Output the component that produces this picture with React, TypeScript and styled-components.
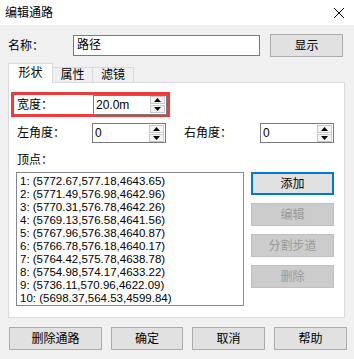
import React from "react";
import styled, { createGlobalStyle } from "styled-components";

const GlobalStyle = createGlobalStyle`
  html, body {
    margin: 0;
    padding: 0;
    background: #f0f0f0;
  }
  body {
    font-family: "Liberation Sans", "Noto Sans CJK SC", sans-serif;
    font-size: 12px;
    color: #000;
  }
`;

const vertices = [
  "1: (5772.67,577.18,4643.65)",
  "2: (5771.49,576.98,4642.96)",
  "3: (5770.31,576.78,4642.26)",
  "4: (5769.13,576.58,4641.56)",
  "5: (5767.96,576.38,4640.87)",
  "6: (5766.78,576.18,4640.17)",
  "7: (5764.42,575.78,4638.78)",
  "8: (5754.98,574.17,4633.22)",
  "9: (5736.11,570.96,4622.09)",
  "10: (5698.37,564.53,4599.84)",
];

export default function App() {
  return (
    <Window>
      <GlobalStyle />
      <TitleBar>
        <Title>编辑通路</Title>
        <CloseIcon width="12" height="12" viewBox="0 0 12 12">
          <path d="M1 1 L11 11 M11 1 L1 11" stroke="#000" strokeWidth="1" />
        </CloseIcon>
      </TitleBar>

      <Body>
        <NameRow>
          <NameLabel>名称：</NameLabel>
          <TextInput>路径</TextInput>
          <Button $width={73}>显示</Button>
        </NameRow>

        <TabStrip>
          <Tab $active $width={45}>形状</Tab>
          <Tab $width={40}>属性</Tab>
          <Tab $width={41}>滤镜</Tab>
        </TabStrip>

        <Panel>
          <Highlight>
            <FieldLabel $width={76}>宽度：</FieldLabel>
            <Spinner value="20.0m" />
          </Highlight>

          <AngleRow>
            <FieldLabel $width={75}>左角度：</FieldLabel>
            <Spinner value="0" />
            <Spacer />
            <FieldLabel $width={76}>右角度：</FieldLabel>
            <Spinner value="0" />
          </AngleRow>

          <SectionLabel>顶点：</SectionLabel>

          <ListRow>
            <List>
              {vertices.map((v) => (
                <ListItem key={v}>{v}</ListItem>
              ))}
            </List>
            <SideButtons>
              <Button $width={83} $focused>添加</Button>
              <Button $width={83} $disabled>编辑</Button>
              <Button $width={83} $disabled>分割步道</Button>
              <Button $width={83} $disabled>删除</Button>
            </SideButtons>
          </ListRow>
        </Panel>

        <Footer>
          <Button $width={93}>删除通路</Button>
          <Button $width={72}>确定</Button>
          <Button $width={73}>取消</Button>
          <Button $width={73}>帮助</Button>
        </Footer>
      </Body>
    </Window>
  );
}

function Spinner({ value }: { value: string }) {
  return (
    <SpinBox>
      <SpinText>{value}</SpinText>
      <SpinButtons>
        <SpinArrow>
          <svg width="7" height="4" viewBox="0 0 7 4">
            <path d="M3.5 0 L7 4 L0 4 Z" fill="#000" />
          </svg>
        </SpinArrow>
        <SpinArrow>
          <svg width="7" height="4" viewBox="0 0 7 4">
            <path d="M0 0 L7 0 L3.5 4 Z" fill="#000" />
          </svg>
        </SpinArrow>
      </SpinButtons>
    </SpinBox>
  );
}

const Window = styled.div`
  width: 354px;
  height: 359px;
  background: #f0f0f0;
  overflow: hidden;
`;

const TitleBar = styled.div`
  height: 25px;
  background: #fff;
  display: flex;
  align-items: center;
  justify-content: space-between;
  padding: 0 9px 0 5px;
  box-sizing: border-box;
`;

const Title = styled.span`
  font-size: 12px;
  line-height: 14px;
`;

const CloseIcon = styled.svg`
  display: block;
`;

const Body = styled.div`
  padding: 9px 0 0 8px;
`;

const NameRow = styled.div`
  display: flex;
  align-items: center;
  height: 23px;
`;

const NameLabel = styled.span`
  width: 65px;
  line-height: 14px;
`;

const TextInput = styled.div`
  width: 187px;
  height: 21px;
  box-sizing: border-box;
  border: 1px solid #7a7a7a;
  background: #fff;
  padding: 0 3px;
  line-height: 19px;
  margin-right: 10px;
`;

const Button = styled.div<{ $width: number; $focused?: boolean; $disabled?: boolean }>`
  width: ${(p) => p.$width}px;
  height: 23px;
  box-sizing: border-box;
  display: flex;
  align-items: center;
  justify-content: center;
  background: ${(p) => (p.$disabled ? "#cccccc" : "#e1e1e1")};
  border: ${(p) => (p.$focused ? "2px solid #0078d7" : p.$disabled ? "1px solid #bfbfbf" : "1px solid #adadad")};
  color: ${(p) => (p.$disabled ? "#9a9a9a" : "#000")};
  line-height: 14px;
`;

const TabStrip = styled.div`
  display: flex;
  align-items: flex-end;
  height: 19px;
  margin-top: 7px;
  position: relative;
  z-index: 1;
  margin-bottom: -1px;
`;

const Tab = styled.div<{ $active?: boolean; $width: number }>`
  width: ${(p) => p.$width}px;
  height: ${(p) => (p.$active ? 20 : 16)}px;
  box-sizing: border-box;
  border: 1px solid #d9d9d9;
  border-bottom: ${(p) => (p.$active ? "none" : "1px solid #d9d9d9")};
  border-left: ${(p) => (p.$active ? "1px solid #d9d9d9" : "none")};
  background: ${(p) => (p.$active ? "#fff" : "#f0f0f0")};
  display: flex;
  align-items: center;
  justify-content: center;
  line-height: 14px;
  padding-bottom: ${(p) => (p.$active ? 2 : 0)}px;
`;

const Panel = styled.div`
  width: 337px;
  height: 236px;
  box-sizing: border-box;
  border: 1px solid #d9d9d9;
  background: #fff;
  padding: 9px 0 0 2px;
`;

const Highlight = styled.div`
  width: 159px;
  height: 25px;
  box-sizing: border-box;
  border: 3px solid #ee3a3a;
  display: flex;
  align-items: center;
  padding-left: 3px;
`;

const FieldLabel = styled.span<{ $width: number }>`
  width: ${(p) => p.$width}px;
  flex-shrink: 0;
  line-height: 14px;
`;

const AngleRow = styled.div`
  display: flex;
  align-items: center;
  height: 20px;
  margin-top: 6px;
  padding-left: 6px;
`;

const Spacer = styled.div`
  width: 18px;
`;

const SpinBox = styled.div`
  width: 74px;
  height: 20px;
  box-sizing: border-box;
  border: 1px solid #7a7a7a;
  background: #fff;
  display: flex;
  align-items: center;
  justify-content: space-between;
  padding: 0 1px 0 2px;
`;

const SpinText = styled.span`
  font-family: "Liberation Sans", sans-serif;
  font-size: 12px;
  line-height: 14px;
`;

const SpinButtons = styled.div`
  display: flex;
  flex-direction: column;
  gap: 1px;
`;

const SpinArrow = styled.div`
  width: 15px;
  height: 8px;
  box-sizing: border-box;
  border: 1px solid #c8c8c8;
  background: #f4f4f4;
  display: flex;
  align-items: center;
  justify-content: center;
  svg {
    display: block;
  }
`;

const SectionLabel = styled.div`
  padding-left: 6px;
  margin-top: 10px;
  line-height: 14px;
`;

const ListRow = styled.div`
  display: flex;
  align-items: flex-start;
  margin-top: 5px;
  padding-left: 5px;
`;

const List = styled.div`
  width: 228px;
  height: 134px;
  box-sizing: border-box;
  border: 1px solid #828790;
  padding: 2px 0 0 3px;
  margin-right: 7px;
`;

const ListItem = styled.div`
  font-family: "Liberation Sans", sans-serif;
  font-size: 11.5px;
  line-height: 13px;
  white-space: nowrap;
`;

const SideButtons = styled.div`
  display: flex;
  flex-direction: column;
  gap: 8px;
`;

const Footer = styled.div`
  display: flex;
  gap: 9px;
  margin-top: 9px;
  margin-left: 1px;
`;
